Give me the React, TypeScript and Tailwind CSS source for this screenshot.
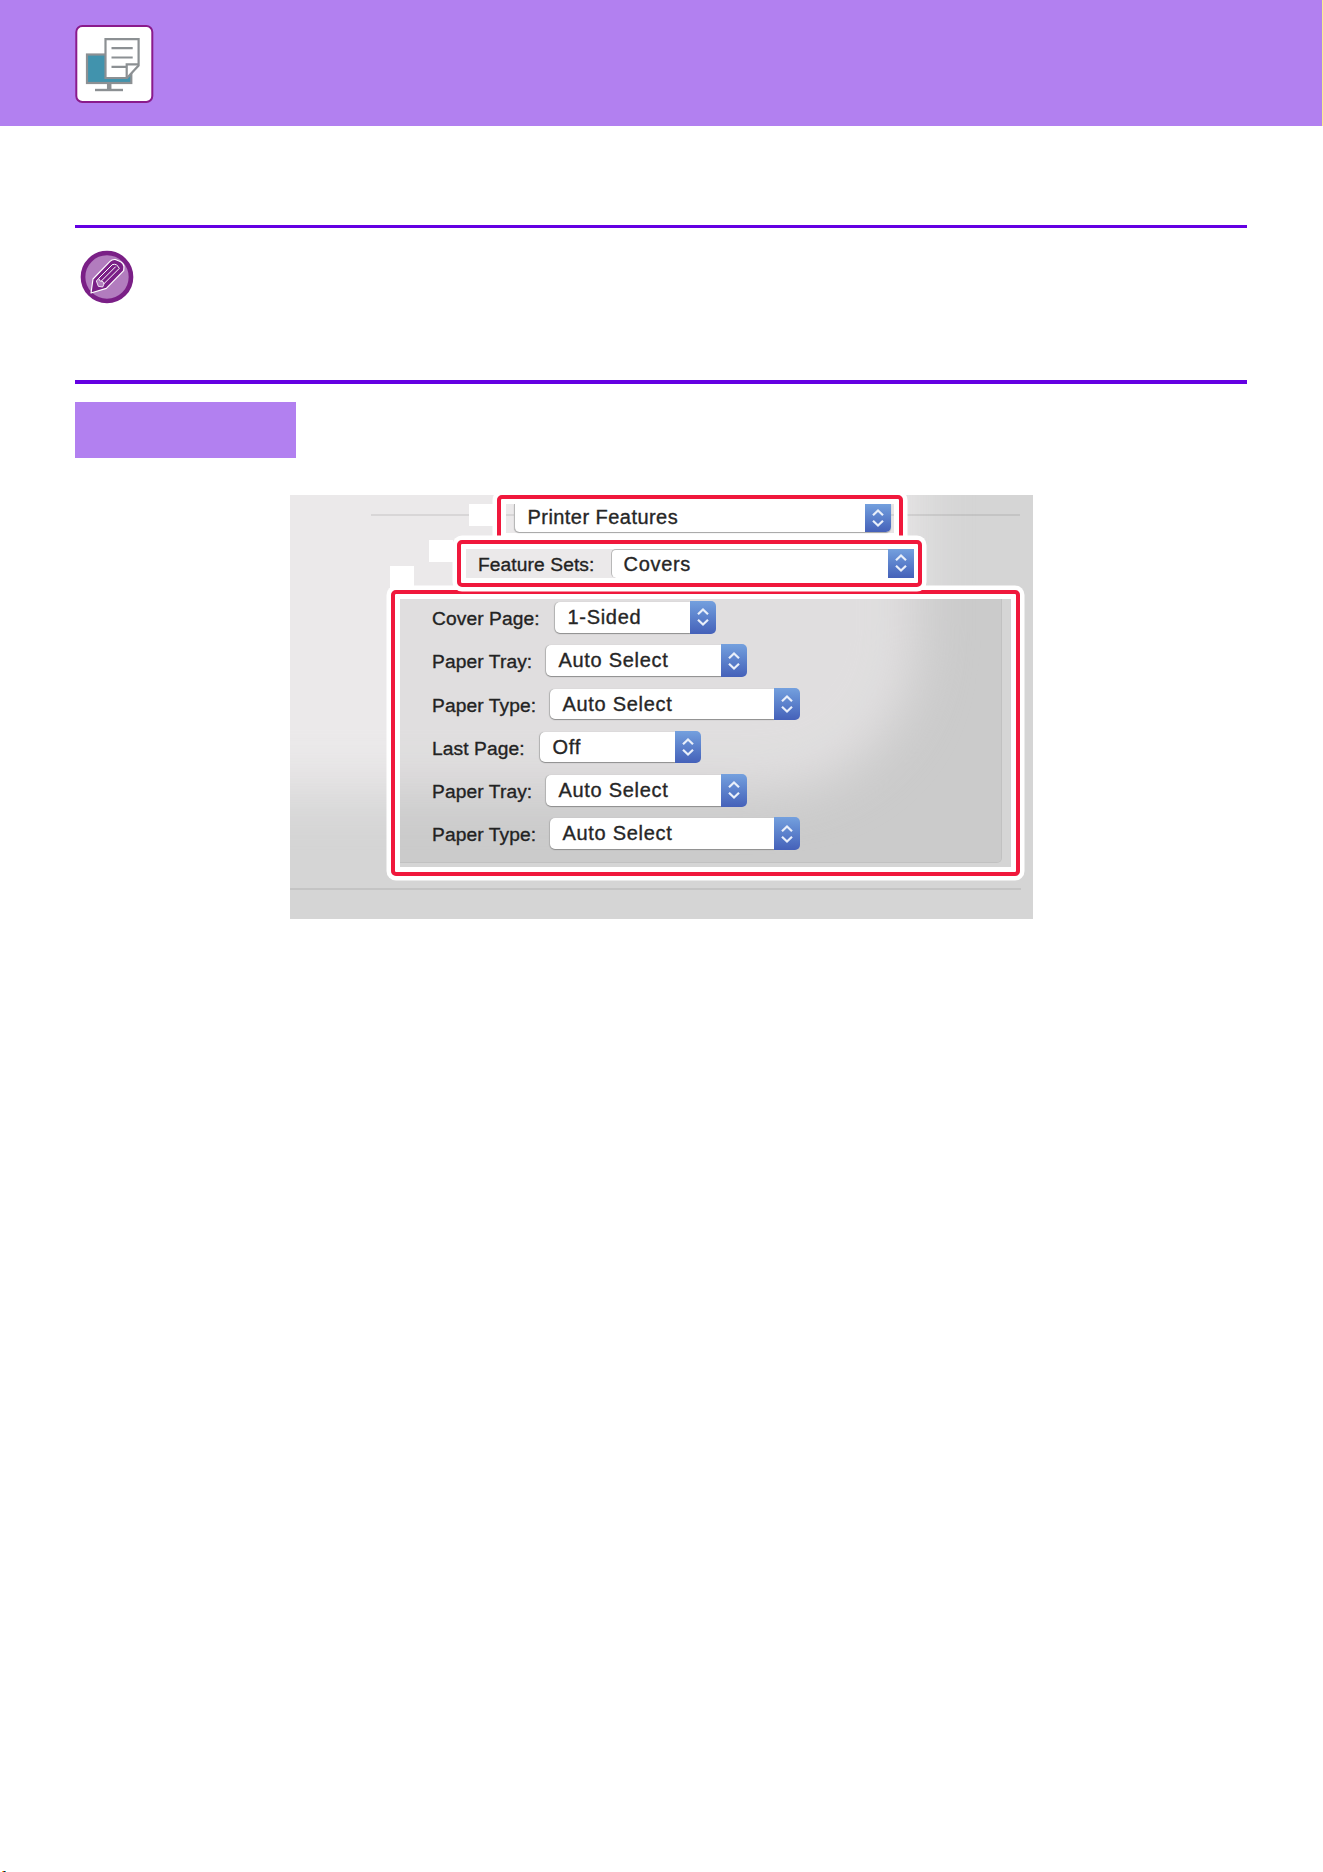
import React from "react";

const Arrows = ({ flush = false }: { flush?: boolean }) => (
  <span
    className={`flex w-[26px] shrink-0 items-center justify-center bg-gradient-to-b from-[#74a0de] to-[#4561b9] ${
      flush ? "" : "rounded-r-[5px]"
    }`}
  >
    <svg width="14" height="20" viewBox="0 0 14 20" fill="none" stroke="#e9effa" strokeWidth="2.2">
      <path d="M2 7.2 7 2.4l5 4.8M2 12.8l5 4.8 5-4.8" />
    </svg>
  </span>
);

type Row = { label: string; labelWidth: string; value: string; width: string };

const rows: Row[] = [
  { label: "Cover Page:", labelWidth: "w-[123px]", value: "1-Sided", width: "w-[161px]" },
  { label: "Paper Tray:", labelWidth: "w-[114px]", value: "Auto Select", width: "w-[201px]" },
  { label: "Paper Type:", labelWidth: "w-[118px]", value: "Auto Select", width: "w-[250px]" },
  { label: "Last Page:", labelWidth: "w-[108px]", value: "Off", width: "w-[161px]" },
  { label: "Paper Tray:", labelWidth: "w-[114px]", value: "Auto Select", width: "w-[201px]" },
  { label: "Paper Type:", labelWidth: "w-[118px]", value: "Auto Select", width: "w-[250px]" },
];

const frame =
  "rounded-[5px] border-4 border-[#f0183c] shadow-[0_0_0_4.5px_#fff,inset_0_0_0_5px_#fff]";

const SettingRow = ({ label, labelWidth, value, width }: Row) => (
  <div className="flex h-[32.5px]">
    <span className={`${labelWidth} shrink-0 pt-[6px] text-[19.2px] leading-6 tracking-[0.1px] text-[#222]`}>{label}</span>
    <div className={`flex ${width}`}>
      <span className="my-px flex-1 rounded-l-[5px] bg-white pl-[12.5px] pt-[3px] text-[20px] leading-6 tracking-[0.7px] text-[#262626] shadow-[0_1px_1px_#8c8c8c,-1px_0_1px_#b5b5b5]">
        {value}
      </span>
      <Arrows />
    </div>
  </div>
);

const PrintIcon = () => (
  <svg width="80" height="80" viewBox="74 24 80 80" fill="none" stroke="#8c9093" strokeWidth="2.2">
    <rect x="76.3" y="26" width="76" height="76" rx="6" fill="#fff" stroke="#8a1a8c" strokeWidth="2" />
    <rect x="87" y="54.5" width="44.3" height="28.5" fill="#4193ad" />
    <path d="M109.2 83v7" strokeWidth="4.5" />
    <path d="M95 90h28" strokeWidth="2.4" />
    <path d="M105.5 39.2h33.1V65.5L127 78h-21.5z" fill="#fff" />
    <path d="M126.7 78V64.3h12" />
    <path d="M111.5 48.2h21.2M111.5 57.500h21.2M111.5 66.8h14.5" />
  </svg>
);

const PencilIcon = () => (
  <svg width="54" height="54" viewBox="60 119 162 162" fill="none" strokeLinejoin="round">
    <circle cx="141" cy="200" r="72" fill="#b27cbe" stroke="#7a1f86" strokeWidth="14" />
    <path
      d="M93 248 99 206 150 153Q157 146 168 148L182 154Q192 160 192 169L191 181 139 234Z"
      fill="#7a1f86"
      stroke="#fff"
      strokeWidth="3.5"
    />
    <path
      d="M109 212 116 204 120 212 129 214 132 221 128 230 115 228Z"
      fill="#b27cbe"
      stroke="#fff"
      strokeWidth="2.5"
    />
    <path d="M116 204 158 162M124 212 167 169M131 221 177 175" stroke="#fff" strokeWidth="3" />
    <path d="M157 163Q171 158 178 175" stroke="#fff" strokeWidth="3" />
  </svg>
);

export default function App() {
  return (
    <div className="h-[1872px] w-[1323px] overflow-hidden bg-white font-['Liberation_Sans',Arial,sans-serif]">
      <div className="flex h-full flex-col">
        <header className="h-[126px] border-r border-[#fbef8e] bg-[#b280f0] pl-[74px] pt-6">
          <PrintIcon />
        </header>

        <main className="flex flex-1 flex-col pl-[75px] pr-[76px] pt-[99px]">
          <section className="h-[159px] border-b-4 border-t-[3px] border-[#6400e2] pl-[5px] pt-[22px]">
            <PencilIcon />
          </section>
          <div className="mt-[18px] h-14 w-[221px] bg-[#b280f0]" />

          <section className="relative ml-[215px] mt-[37px] flex h-[424px] w-[743px] flex-col overflow-hidden bg-[#d5d5d5] [-webkit-text-stroke:0.35px_#262626]">
            <div className="absolute -left-[200px] -top-[300px] h-[595px] w-[826px] rounded-br-[150px] bg-[#ebe9ea] blur-[27px]" />
            <div className="absolute left-[81px] top-[19px] h-0.5 w-[649px] bg-black/[0.08]" />
            <div className="absolute left-[179px] top-[9px] h-[22px] w-6 bg-white" />
            <div className="absolute left-[139px] top-[45px] h-[22px] w-6 bg-white" />
            <div className="absolute left-[100px] top-[71px] h-[22px] w-6 bg-white" />

            <div className={`relative ml-[207px] h-[47px] w-[406px] ${frame}`}>
              <div className="ml-[13px] mt-[5px] flex h-7 w-[377px] overflow-hidden rounded-b-[5px] border-l border-[#b8b8b8] bg-white shadow-[0_1px_1px_#a5a5a5]">
                <span className="flex-1 pl-[12.5px] text-[20px] leading-[27px] tracking-[0.45px] text-[#262626]">Printer Features</span>
                <Arrows flush />
              </div>
            </div>

            <div className={`relative z-20 ml-[167px] -mt-0.5 h-[47px] w-[465px] ${frame}`}>
              <div className="ml-[5px] mt-[5px] flex h-[28.5px] w-[448px]">
                <span className="w-[144.5px] shrink-0 pl-3 pt-[4px] text-[19.2px] leading-6 tracking-[0.1px] text-[#222]">Feature Sets:</span>
                <div className="flex flex-1 rounded-l-[5px] border-l border-t border-[#b8b8b8] bg-white">
                  <span className="flex-1 pl-[12px] text-[20px] leading-[28px] tracking-[0.7px] text-[#262626]">Covers</span>
                  <span className="-mt-px flex">
                    <Arrows flush />
                  </span>
                </div>
              </div>
            </div>

            <div className={`relative z-10 ml-[101px] mt-[3px] h-[286px] w-[629px] p-[5px] ${frame}`}>
              <div className="flex h-[264px] w-[602px] flex-col gap-[10.75px] rounded-br-[5px] border-b border-r border-black/5 bg-black/[0.045] pl-8 pt-[2px]">
                {rows.map((row, i) => (
                  <SettingRow key={i} {...row} />
                ))}
              </div>
            </div>

            <div className="mt-3 h-0.5 w-[731px] shrink-0 bg-black/[0.08]" />
          </section>
        </main>

        <footer className="flex h-px pl-0.5">
          <span className="w-px bg-[#f5d800]" />
          <span className="w-px bg-[#b0203a]" />
          <span className="w-px bg-[#222]" />
          <span className="w-px bg-[#19a7c8]" />
        </footer>
      </div>
    </div>
  );
}
